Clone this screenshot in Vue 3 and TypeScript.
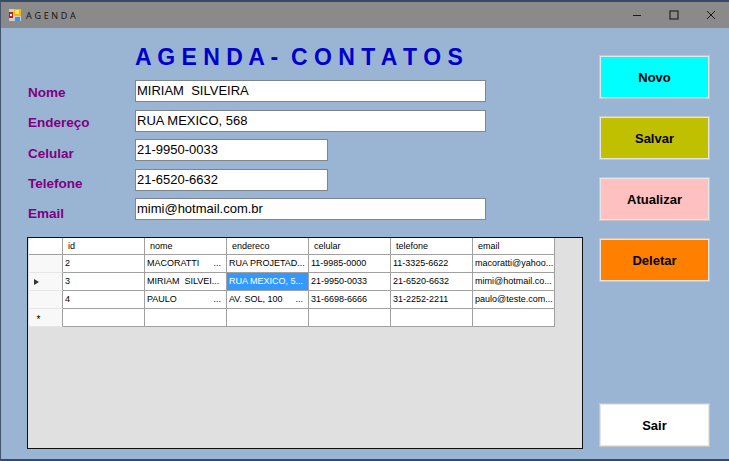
<script setup lang="ts">
interface Row { id: string; nome: string; nomeDots?: boolean; endereco: string; endDots?: boolean; celular: string; telefone: string; email: string; current?: boolean }
const title = 'A G E N D A -  C O N T A T O S'
const columns = ['id', 'nome', 'endereco', 'celular', 'telefone', 'email']
const rows: Row[] = [
  { id: '2', nome: 'MACORATTI', nomeDots: true, endereco: 'RUA PROJETAD...', celular: '11-9985-0000', telefone: '11-3325-6622', email: 'macoratti@yahoo...' },
  { id: '3', nome: 'MIRIAM  SILVEI...', endereco: 'RUA MEXICO, 5...', celular: '21-9950-0033', telefone: '21-6520-6632', email: 'mimi@hotmail.co...', current: true },
  { id: '4', nome: 'PAULO', nomeDots: true, endereco: 'AV. SOL, 100', endDots: true, celular: '31-6698-6666', telefone: '31-2252-2211', email: 'paulo@teste.com...' },
]
const fields = [
  { label: 'Nome', value: 'MIRIAM  SILVEIRA', short: false, nudge: 5 },
  { label: 'Endereço', value: 'RUA MEXICO, 568', short: false, nudge: 5 },
  { label: 'Celular', value: '21-9950-0033', short: true, nudge: 7 },
  { label: 'Telefone', value: '21-6520-6632', short: true, nudge: 7 },
  { label: 'Email', value: 'mimi@hotmail.com.br', short: false, nudge: 8 },
]
const buttons = [
  { text: 'Novo', cls: 'novo' },
  { text: 'Salvar', cls: 'salvar' },
  { text: 'Atualizar', cls: 'atualizar' },
  { text: 'Deletar', cls: 'deletar' },
]
</script>

<template>
  <div class="window">
    <header class="titlebar">
      <svg class="appicon" width="12" height="12" viewBox="0 0 12 12">
        <rect x="0" y="0" width="12" height="12" fill="#cfcfcf" />
        <rect x="5" y="0" width="7" height="7" fill="#f2b705" />
        <rect x="6" y="1" width="4" height="4" fill="#ffe566" />
        <rect x="0" y="3" width="4" height="6" fill="#d01818" />
        <rect x="1" y="5" width="2" height="2" fill="#ffffff" />
        <rect x="6" y="8" width="5" height="4" fill="#4a8fe0" />
      </svg>
      <span class="apptitle">AGENDA</span>
      <div class="winctl">
        <svg width="10" height="10" viewBox="0 0 10 10"><path d="M1 5.5H9" stroke="#1a1a1a" fill="none" /></svg>
        <svg width="10" height="10" viewBox="0 0 10 10"><rect x="1" y="1" width="8" height="8" stroke="#1a1a1a" stroke-width="1.1" fill="none" /></svg>
        <svg width="10" height="10" viewBox="0 0 10 10"><path d="M1 1L9 9M9 1L1 9" stroke="#1a1a1a" fill="none" /></svg>
      </div>
    </header>
    <main class="client">
      <div class="left">
        <h1 class="heading">{{ title }}</h1>
        <div class="form">
          <div v-for="f in fields" :key="f.label" class="field">
            <label class="label" :style="{ paddingTop: f.nudge + 'px' }">{{ f.label }}</label>
            <div class="input" :class="{ short: f.short }">{{ f.value }}</div>
          </div>
        </div>
        <div class="grid">
          <div class="grow head">
            <div class="rh"></div>
            <div v-for="c in columns" :key="c" class="hc">{{ c }}</div>
          </div>
          <div v-for="r in rows" :key="r.id" class="grow">
            <div class="rh"><span v-if="r.current" class="arrow"></span></div>
            <div class="c">{{ r.id }}</div>
            <div class="c between"><span>{{ r.nome }}</span><span v-if="r.nomeDots">...</span></div>
            <div class="c between" :class="{ sel: r.current }"><span>{{ r.endereco }}</span><span v-if="r.endDots">...</span></div>
            <div class="c">{{ r.celular }}</div>
            <div class="c">{{ r.telefone }}</div>
            <div class="c">{{ r.email }}</div>
          </div>
          <div class="grow">
            <div class="rh star">*</div>
            <div v-for="c in columns" :key="c" class="c"></div>
          </div>
        </div>
      </div>
      <div class="actions">
        <button v-for="b in buttons" :key="b.text" class="btn" :class="b.cls">{{ b.text }}</button>
        <button class="btn sair">Sair</button>
      </div>
    </main>
  </div>
</template>

<style>
html, body { margin: 0; background: #9ab5d3; }
</style>

<style scoped>
.window {
  width: 729px;
  height: 461px;
  box-sizing: border-box;
  border-top: 2px solid #3a4a66;
  border-left: 1px solid #44546f;
  border-bottom: 2px solid #3a4a66;
  background: #9ab5d3;
  display: flex;
  flex-direction: column;
  font-family: "Liberation Sans", Arial, sans-serif;
  overflow: hidden;
}
.titlebar {
  height: 26px;
  flex: none;
  background: #8a8a8a;
  display: flex;
  align-items: center;
  padding-left: 8px;
}
.appicon { flex: none; }
.apptitle {
  margin-left: 5px;
  font-family: "Open Sans", sans-serif;
  font-size: 9px;
  letter-spacing: 2.7px;
  color: #111;
}
.winctl {
  margin-left: auto;
  display: flex;
  gap: 27px;
  padding-right: 13px;
  align-items: center;
}
.winctl svg { display: block; }
.client {
  flex: 1;
  display: flex;
  min-height: 0;
}
.left {
  width: 598px;
  flex: none;
  padding-left: 26px;
  box-sizing: border-box;
}
.heading {
  margin: 12px 0 0 108px;
  height: 40px;
  line-height: 34px;
  font-size: 23px;
  font-weight: 700;
  color: #0000cd;
  white-space: pre;
}
.form {
  display: flex;
  flex-direction: column;
  gap: 7.5px;
}
.field {
  display: flex;
  align-items: flex-start;
  height: 22px;
}
.label {
  width: 108px;
  padding-left: 1px;
  box-sizing: border-box;
  font-size: 13.5px;
  font-weight: 700;
  color: #800080;
}
.input {
  width: 351px;
  height: 22px;
  box-sizing: border-box;
  background: #fff;
  border: 1px solid #7f8588;
  padding-left: 1px;
  font-size: 13px;
  line-height: 20px;
  color: #000;
  white-space: pre;
}
.input.short { width: 193px; }
.grid {
  margin-top: 17px;
  width: 556px;
  height: 212px;
  box-sizing: border-box;
  border: 1px solid #111;
  background: #e0e0e0;
  padding-left: 1px;
}
.grow {
  display: flex;
  height: 18px;
  width: 526px;
  font-size: 9px;
  color: #000;
}
.grow.head { height: 17px; }
.rh {
  width: 34px;
  flex: none;
  box-sizing: border-box;
  background: #f8f8f8;
  border-right: 1px solid #a0a0a0;
  border-bottom: 1px solid #e6e6e6;
  display: flex;
  align-items: center;
  justify-content: center;
}
.head .rh { background: #fff; border-bottom-color: #a0a0a0; }
.star { font-size: 10px; padding-top: 4px; padding-right: 14px; }
.arrow {
  width: 0;
  height: 0;
  border-left: 5px solid #333;
  border-top: 3.5px solid transparent;
  border-bottom: 3.5px solid transparent;
  margin-right: 19px;
}
.hc, .c {
  width: 82px;
  flex: none;
  box-sizing: border-box;
  background: #fff;
  border-right: 1px solid #a0a0a0;
  border-bottom: 1px solid #a0a0a0;
  white-space: pre;
  overflow: hidden;
  line-height: 17px;
}
.hc { padding-left: 5px; line-height: 16px; }
.c { padding-left: 2px; padding-right: 5px; }
.between { display: flex; justify-content: space-between; }
.sel { background: #3399ff; color: #fff; }
.actions {
  flex: 1;
  display: flex;
  flex-direction: column;
  padding-top: 27px;
  gap: 17px;
}
.btn {
  width: 111px;
  height: 44px;
  flex: none;
  box-sizing: border-box;
  border: 2px solid #e6e6e6;
  outline: 1px solid #c6c6c6;
  outline-offset: -1px;
  font-family: "Liberation Sans", Arial, sans-serif;
  font-size: 13px;
  font-weight: 700;
  color: #000;
  padding: 0;
}
.novo { background: #00ffff; }
.salvar { background: #c0c000; }
.atualizar { background: #ffc0c0; }
.deletar { background: #ff8000; }
.sair { background: #fff; margin-top: auto; margin-bottom: 12px; }
</style>
